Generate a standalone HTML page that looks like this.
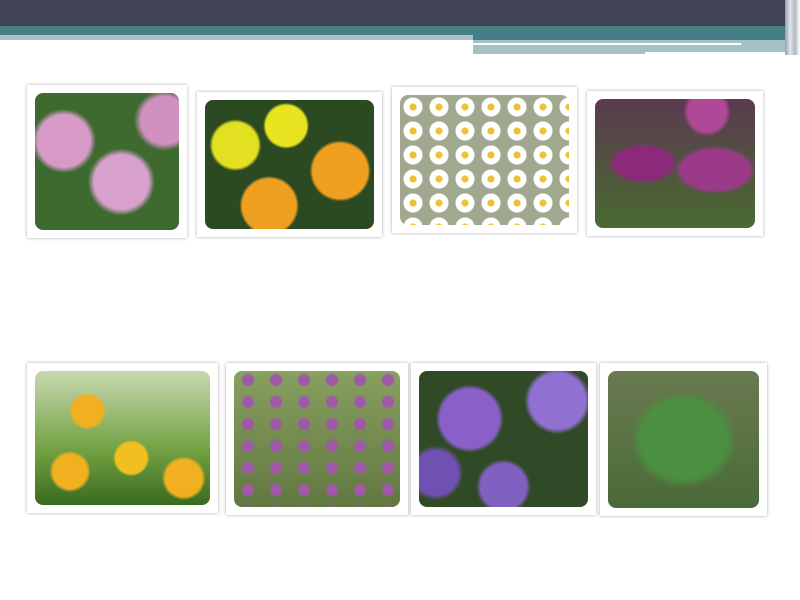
<!DOCTYPE html>
<html><head><style>
body{margin:0;width:800px;height:600px;background:#fff;position:relative;overflow:hidden;font-family:"Liberation Sans",sans-serif}
.a{position:absolute}
.f{position:absolute;background:#fff;box-shadow:0 0 3px rgba(0,0,0,.35)}
.i{position:absolute;left:8px;top:8px;right:8px;bottom:8px;border-radius:8px;overflow:hidden}
</style></head><body>
<div class="a" style="left:0;top:0;width:800px;height:26px;background:#424257"></div>
<div class="a" style="left:0;top:26px;width:800px;height:9px;background:#437f84"></div>
<div class="a" style="left:0;top:35px;width:473px;height:5px;background:#a7c3c6"></div>
<div class="a" style="left:473px;top:35px;width:327px;height:5px;background:#437f84"></div>
<div class="a" style="left:473px;top:40px;width:327px;height:14px;background:#a5c2c4"></div>
<div class="a" style="left:473px;top:43px;width:268px;height:2px;background:#fff"></div>
<div class="a" style="left:645px;top:52px;width:140px;height:3px;background:#fff"></div>
<div class="a" style="left:785px;top:0;width:15px;height:55px;background:linear-gradient(90deg,#9a9aa8,#e0e6e8,#b0b8c0,#fff)"></div>

<div class="f" style="left:27px;top:85px;width:160px;height:153px"><div class="i" style="background:radial-gradient(circle at 20% 35%,#d89ac8 0 18%,transparent 22%),radial-gradient(circle at 60% 65%,#d8a0cc 0 22%,transparent 27%),radial-gradient(circle at 90% 20%,#d090c0 0 14%,transparent 18%),#3e6a30"></div></div>
<div class="f" style="left:197px;top:92px;width:185px;height:145px"><div class="i" style="background:radial-gradient(circle at 18% 35%,#e2e020 0 14%,transparent 16%),radial-gradient(circle at 48% 20%,#e8e420 0 15%,transparent 17%),radial-gradient(circle at 80% 55%,#f0a020 0 18%,transparent 20%),radial-gradient(circle at 38% 82%,#f0a020 0 18%,transparent 20%),#2c4a22"></div></div>
<div class="f" style="left:392px;top:87px;width:185px;height:146px"><div class="i" style="background:radial-gradient(circle,#f0c030 0 3px,#fff 4px 9px,transparent 10px) 0 0/26px 24px,#a0a890"></div></div>
<div class="f" style="left:587px;top:91px;width:176px;height:145px"><div class="i" style="background:radial-gradient(ellipse at 30% 50%,#8a2a78 0 18%,transparent 22%),radial-gradient(ellipse at 75% 55%,#9a3a88 0 20%,transparent 24%),radial-gradient(ellipse at 70% 10%,#b04898 0 12%,transparent 15%),linear-gradient(#5a3a50,#4a6a30)"></div></div>

<div class="f" style="left:27px;top:363px;width:191px;height:150px"><div class="i" style="background:radial-gradient(circle at 30% 30%,#f0b020 0 10%,transparent 12%),radial-gradient(circle at 55% 65%,#f0c020 0 12%,transparent 14%),radial-gradient(circle at 20% 75%,#f0b020 0 10%,transparent 12%),radial-gradient(circle at 85% 80%,#f0b020 0 10%,transparent 12%),linear-gradient(#c8d8b0,#70a040 60%,#3a6a20)"></div></div>
<div class="f" style="left:226px;top:363px;width:182px;height:152px"><div class="i" style="background:radial-gradient(circle,#a058a8 0 5px,transparent 7px) 0 20px/28px 22px,linear-gradient(#88a060,#607840)"></div></div>
<div class="f" style="left:411px;top:363px;width:185px;height:152px"><div class="i" style="background:radial-gradient(circle at 30% 35%,#8860c8 0 20%,transparent 23%),radial-gradient(circle at 82% 22%,#9070d0 0 16%,transparent 19%),radial-gradient(circle at 50% 85%,#8060c0 0 16%,transparent 19%),radial-gradient(circle at 10% 75%,#7050b0 0 12%,transparent 15%),#304a28"></div></div>
<div class="f" style="left:600px;top:363px;width:167px;height:153px"><div class="i" style="background:radial-gradient(ellipse at 50% 50%,#4a9040 0 40%,transparent 50%),linear-gradient(#6a7a50,#4a6a38)"></div></div>
</body></html>
